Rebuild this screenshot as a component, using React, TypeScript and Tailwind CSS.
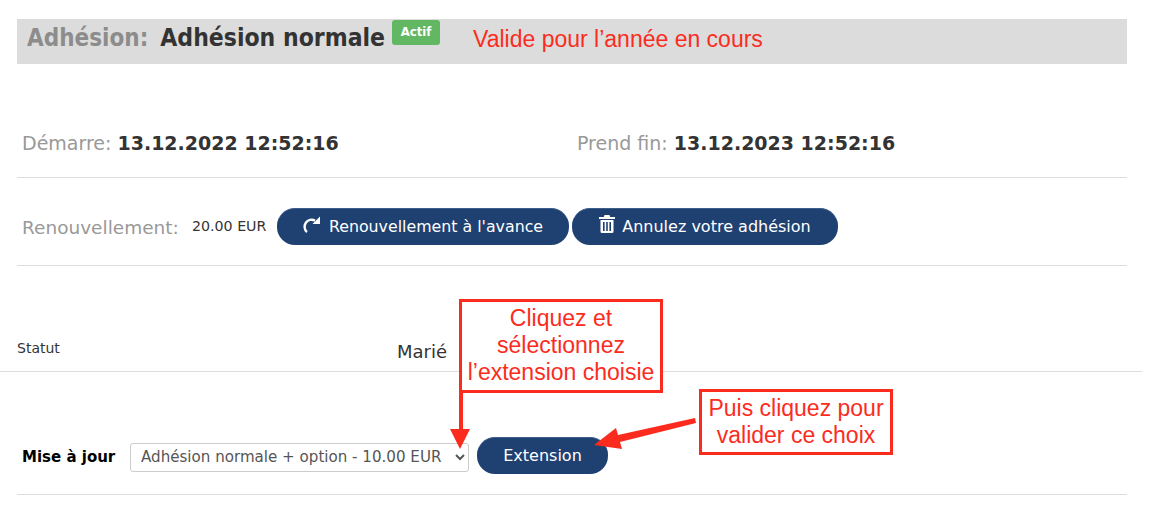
const sans = "font-['DejaVu_Sans',sans-serif]";
const condensed = "font-['DejaVu_Sans_Condensed','DejaVu_Sans',sans-serif]";
const note = "font-['Liberation_Sans',Arial,sans-serif] text-[#fb2c1e]";

function RepeatIcon() {
  return (
    <svg width="18" height="18" viewBox="0 0 18 18" className="mb-[5px]">
      <path d="M4 16A7 7 0 0 1 12 4.6" fill="none" stroke="currentColor" strokeWidth="2.4" />
      <polygon points="17,0.5 17,8 9.5,8" fill="currentColor" />
    </svg>
  );
}

function TrashIcon() {
  return (
    <svg width="16" height="18" viewBox="0 0 16 18" fill="currentColor" className="mb-[6px]">
      <path d="M5.5 0h5l.7 2H16v2H0V2h4.8z" />
      <path fillRule="evenodd" d="M1.5 5h13v11.5a1.5 1.5 0 0 1-1.5 1.5H3a1.5 1.5 0 0 1-1.5-1.5zM4 7v9h1.6V7zm3.2 0v9h1.6V7zm3.2 0v9H12V7z" />
    </svg>
  );
}

function PillButton({ children, className }: { children: React.ReactNode; className: string }) {
  return (
    <button className={`flex items-center justify-center h-[37px] rounded-[18px] bg-[#1f4172] border-t border-[#3d5d8a] text-white text-[16px] ${className}`}>
      {children}
    </button>
  );
}

export default function App() {
  return (
    <div className={`relative w-[1151px] h-[506px] overflow-hidden bg-white ${sans}`}>
      <div className="pt-[19px] pl-[17px] w-[1127px]">
        <div className="flex items-start h-[45px] bg-[#dcdcdc] pl-[10px]">
          <span className={`mt-[2px] text-[24px] leading-[34px] font-bold text-[#8c8c8c] ${condensed}`}>Adhésion:</span>
          <span className={`ml-[12px] mt-[2px] text-[24.5px] leading-[34px] font-bold text-[#333333] ${condensed}`}>Adhésion normale</span>
          <span className={`ml-[7px] mt-[1px] w-[48px] h-[25px] rounded-[3px] bg-[#62b762] text-white text-[13px] leading-[23px] font-bold text-center ${condensed}`}>Actif</span>
          <span className={`ml-[33px] mt-[6px] text-[23px] leading-[28px] ${note}`}>Valide pour l’année en cours</span>
        </div>

        <div className="flex items-center h-[114px] pt-[45px] pl-[5px] text-[19px] border-b border-[#dddddd]">
          <div className="w-[555px] text-[#999999]">Démarre: <b className="text-[#333333]">13.12.2022 12:52:16</b></div>
          <div className="text-[#999999]">Prend fin: <b className="text-[#333333]">13.12.2023 12:52:16</b></div>
        </div>

        <div className="flex items-center h-[88px] pt-[10px] pl-[5px] border-b border-[#dddddd]">
          <span className="mt-[2px] w-[170px] text-[18.5px] text-[#999999]">Renouvellement:</span>
          <span className="w-[85px] text-[14.2px] text-[#333333]">20.00 EUR</span>
          <PillButton className="w-[292px] gap-[8px]">
            <RepeatIcon />
            <span className="text-[15.8px]">Renouvellement à l'avance</span>
          </PillButton>
          <PillButton className="ml-[3px] w-[266px] gap-[7px]">
            <TrashIcon />
            Annulez votre adhésion
          </PillButton>
        </div>
      </div>

      <div className="flex items-end h-[106px] border-b border-[#dddddd] w-[1142px] pb-[6px] pl-[17px]">
        <span className="w-[380px] mb-[6px] text-[14px] text-[#333333]">Statut</span>
        <span className="text-[18px] text-[#333333]">Marié</span>
      </div>

      <div className="ml-[17px] w-[1110px] h-[123px] flex items-center pt-[46px] pl-[5px] border-b border-[#dddddd]">
        <span className="mt-[2px] w-[108px] text-[15px] font-bold text-black">Mise à jour</span>
        <select
          defaultValue="a"
          className={`mt-[2px] w-[339px] h-[29px] pl-[6px] rounded-[3px] border border-[#cccccc] bg-white text-[15.1px] text-[#555555] ${sans}`}
        >
          <option value="a">Adhésion normale + option - 10.00 EUR</option>
        </select>
        <PillButton className="ml-[8px] w-[131px] mb-[1px]">Extension</PillButton>
      </div>

      <div className={`absolute left-[459px] top-[299px] w-[204px] h-[94px] border-[3px] border-[#fb2c1e] bg-white text-center text-[23px] leading-[27px] pt-[3px] ${note}`}>
        Cliquez et<br />sélectionnez<br />l’extension choisie
      </div>
      <div className={`absolute left-[699px] top-[389px] w-[194px] h-[66px] border-[3px] border-[#fb2c1e] bg-white text-center text-[23px] leading-[27px] pt-[3px] ${note}`}>
        Puis cliquez pour<br />valider ce choix
      </div>

      <svg className="absolute left-0 top-0 pointer-events-none" width="1151" height="506" fill="#fb2c1e" stroke="none">
        <rect x="459" y="390" width="4" height="40" />
        <polygon points="450,429 470,429 460,449" />
        <polygon points="695,418 696,423 620,442 622,449 594,445 616,428 618,435" />
      </svg>
    </div>
  );
}
